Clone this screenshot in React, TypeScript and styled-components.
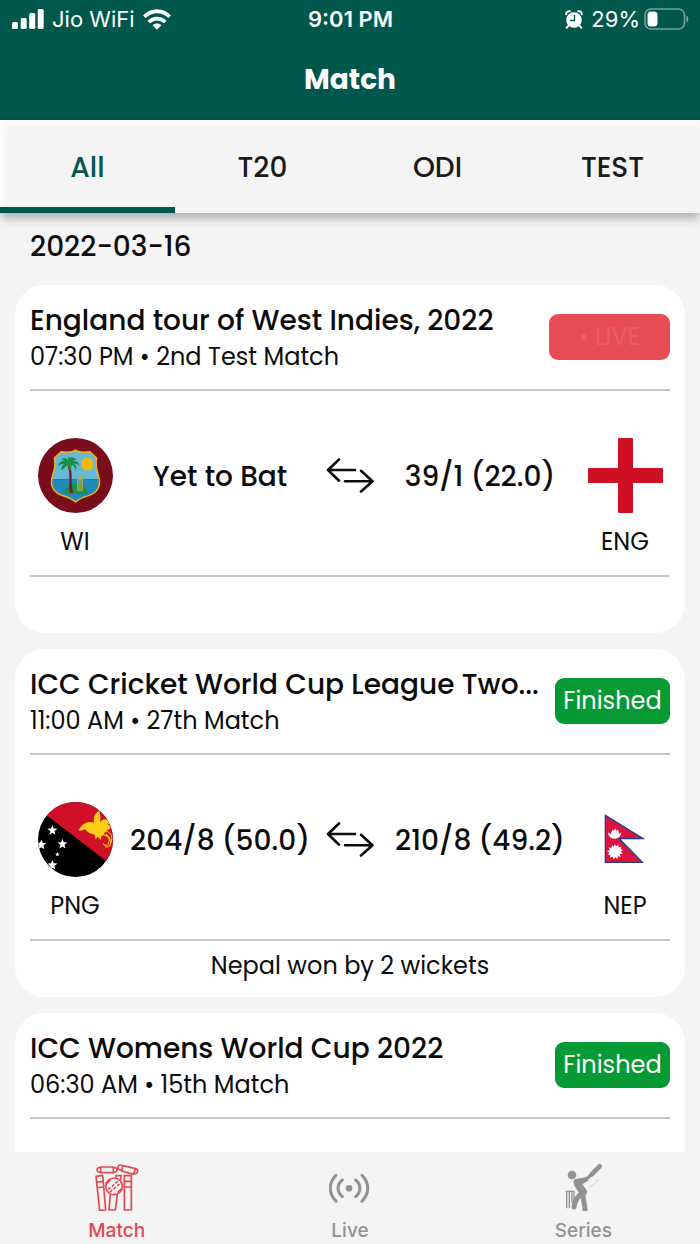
import React from 'react';
import styled, { createGlobalStyle } from 'styled-components';

const green = '#00574b';
const red = '#e5474f';

const GlobalStyle = createGlobalStyle`
  *, *::before, *::after { box-sizing: border-box; }
  body { margin: 0; background: #f4f4f4; }
  body, button { font-family: Poppins, Inter, "Noto Sans", sans-serif; color: #0c0c0c; }
  h1, h2, h3, p { margin: 0; }
`;

const Screen = styled.div`
  display: flex;
  flex-direction: column;
  height: 100vh;
  background: #f4f4f4;
`;

const Header = styled.header`
  flex: none;
  background: ${green};
  color: #fff;
`;

const StatusBar = styled.div`
  display: grid;
  grid-template-columns: 1fr auto 1fr;
  align-items: center;
  height: 38px;
  padding: 0 11px 0 12px;
  font-family: Inter, sans-serif;
  font-size: 22px;
  line-height: 28px;
`;

const StatusGroup = styled.div<{ $end?: boolean }>`
  display: flex;
  align-items: center;
  justify-content: ${(p) => (p.$end ? 'flex-end' : 'flex-start')};
  gap: 8px;
`;

const Charge = styled.span`
  display: flex;
  align-items: center;
  gap: 4px;
`;

const Clock = styled.span`
  font-weight: 600;
`;

const PageTitle = styled.h1`
  height: 82px;
  font-size: 28px;
  font-weight: 700;
  line-height: 84px;
  text-align: center;
`;

const Tabs = styled.nav`
  position: relative;
  z-index: 1;
  display: flex;
  flex: none;
  height: 93px;
  background: #f4f4f4;
  box-shadow: 0 5px 10px rgba(0, 0, 0, 0.3), inset 0 10px 10px -6px #fff, inset 8px 0 8px -6px #fff;
`;

const Tab = styled.button<{ $active?: boolean }>`
  flex: 1;
  padding: 8px 0 0;
  border: 0;
  border-bottom: 6px solid ${(p) => (p.$active ? green : 'transparent')};
  background: none;
  color: ${(p) => (p.$active ? green : '#1a1a1a')};
  font-size: 28px;
  font-weight: 500;
  line-height: 36px;
`;

const List = styled.main`
  flex: 1;
  min-height: 0;
  padding: 16px 15px 0;
  overflow: hidden;
`;

const DateHeading = styled.h2`
  margin: 0 15px 20px;
  font-size: 28px;
  font-weight: 500;
  line-height: 36px;
`;

const Card = styled.article`
  min-height: 348px;
  margin-bottom: 16px;
  padding: 0 15px;
  border-radius: 30px;
  background: #fff;
`;

const CardHead = styled.div`
  display: flex;
  align-items: center;
  justify-content: space-between;
  gap: 12px;
  height: 106px;
  border-bottom: 2px solid #c8c8c8;
`;

const CardText = styled.div`
  min-width: 0;
  padding-top: 3px;
  white-space: nowrap;
`;

const CardTitle = styled.h3`
  font-size: 28px;
  font-weight: 500;
  line-height: 36px;
`;

const Detail = styled.p`
  font-size: 24px;
  line-height: 36px;
`;

const Badge = styled.span<{ $live?: boolean }>`
  flex: none;
  min-width: ${(p) => (p.$live ? 121 : 115)}px;
  border-radius: 9px;
  background: ${(p) => (p.$live ? '#e84c54' : '#069a34')};
  color: ${(p) => (p.$live ? '#e85f67' : '#fff')};
  font-size: 24px;
  line-height: 46px;
  text-align: center;
`;

const Teams = styled.div`
  display: grid;
  grid-template-columns: 90px 1fr 60px 1fr 90px;
  height: 186px;
  padding-top: 47px;
  border-bottom: 2px solid #c8c8c8;
  text-align: center;
`;

const Team = styled.div`
  display: flex;
  flex-direction: column;
  align-items: center;
  gap: 11px;
  font-size: 24px;
  line-height: 36px;
`;

const Score = styled.p`
  font-size: 28px;
  font-weight: 500;
  line-height: 78px;
  white-space: nowrap;
`;

const Swap = styled.div`
  display: flex;
  align-items: center;
  justify-content: center;
  height: 75px;
`;

const Result = styled.p`
  padding-top: 7px;
  font-size: 24px;
  line-height: 36px;
  text-align: center;
`;

const BottomNav = styled.nav`
  display: flex;
  flex: none;
  height: 92px;
  background: #f4f4f4;
`;

const NavItem = styled.button<{ $active?: boolean }>`
  display: flex;
  flex: 1;
  flex-direction: column;
  align-items: center;
  gap: 8px;
  padding: 11px 0 0;
  border: 0;
  background: none;
  color: ${(p) => (p.$active ? red : '#929292')};
  font-family: Inter, sans-serif;
  font-size: 19px;
  font-weight: 500;
  line-height: 24px;
`;

const SignalIcon = () => (
  <svg width="32" height="20" viewBox="0 0 32 20" fill="#fff" aria-hidden="true">
    <rect x="0" y="13" width="6" height="7" rx="1.5" />
    <rect x="8.7" y="9" width="6" height="11" rx="1.5" />
    <rect x="17.2" y="4" width="6" height="16" rx="1.5" />
    <rect x="25.7" y="0" width="6" height="20" rx="1.5" />
  </svg>
);

const WifiIcon = () => (
  <svg width="28" height="21" viewBox="0 0 28 21" fill="none" stroke="#fff" strokeWidth="3.8" aria-hidden="true">
    <path d="M1.3 7.8C8.5 .4 19.5 .4 26.7 7.8" />
    <path d="M5.8 13C10.4 8.6 17.6 8.6 22.2 13" />
    <path d="M14 20.8l-4.4-4.6c2.5-2.2 6.3-2.2 8.8 0z" fill="#fff" stroke="none" />
  </svg>
);

const AlarmIcon = () => (
  <svg width="18" height="19" viewBox="0 0 18 19" aria-hidden="true">
    <circle cx="9" cy="10" r="7.8" fill="#fff" />
    <path d="M1.2 4.2a3 3 0 0 1 3.6-3M16.8 4.2a3 3 0 0 0-3.6-3M3.6 15.5l-2 2.3M14.4 15.5l2 2.3" fill="none" stroke="#fff" strokeWidth="2" strokeLinecap="round" />
    <path d="M9.5 5v5.5H5" fill="none" stroke={green} strokeWidth="1.3" />
  </svg>
);

const BatteryIcon = () => (
  <svg width="45" height="22" viewBox="0 0 45 22" aria-hidden="true">
    <rect x="1" y="1" width="39.5" height="20" rx="6" fill="none" stroke="#fff" strokeOpacity=".45" strokeWidth="1.6" />
    <rect x="3.5" y="3.5" width="10" height="15" rx="3.5" fill="#fff" />
    <path d="M42.5 7.5c2.4 1.4 2.4 5.6 0 7z" fill="#fff" fillOpacity=".5" />
  </svg>
);

const SwapIcon = () => (
  <svg width="48" height="35" viewBox="0 0 48 35" fill="none" stroke="#0c0c0c" strokeWidth="2.6" strokeLinecap="round" strokeLinejoin="round" aria-label="versus">
    <path d="M29 12H2M13 1.5L2 12l11 10.7" />
    <path d="M19 23.3h27.5M35 12.8l11.5 10.5L35 33.5" />
  </svg>
);

const shieldOutline =
  'M112 36c10 8 27 7 43 5l20 19c-6 24 2 38 8 62 4 28-9 42-32 50-18 6-29 10-39 19-10-9-21-13-39-19-23-8-36-22-32-50 6-24 14-38 8-62l20-19c16 2 33 3 43-5z';

const WestIndiesFlag = () => (
  <svg width="75" height="75" viewBox="0 0 224 224" aria-hidden="true">
    <defs>
      <clipPath id="shield"><path d={shieldOutline} /></clipPath>
    </defs>
    <circle cx="112" cy="112" r="112" fill="#7a0d1b" />
    <g clipPath="url(#shield)">
      <rect x="30" y="25" width="165" height="98" fill="#67bad7" />
      <rect x="30" y="123" width="165" height="80" fill="#218abd" />
      <path d="M77 167c8-42 63-42 73 0z" fill="#179447" />
    </g>
    <circle cx="147" cy="78" r="19" fill="#f5b90e" />
    <path d="M89 84c8 25 3 50 6 80h10c-8-31-1-55-8-80z" fill="#7a1a1c" />
    <path d="M93 73c-4-14-17-18-24-8 5-1 9 1 12 4-14-2-20 7-21 15 6-6 12-7 18-6-8 6-9 13-7 20 5-9 12-13 20-16 1 5 3 9 2 15 7-5 8-11 7-17 8 4 11 9 13 17 5-9 1-15-5-20 7-1 11 2 16 6-2-10-9-15-19-14 3-4 6-5 11-4-8-10-19-8-23 8z" fill="#138f42" />
    <path d="M93 70c-10-16 4-17 2-7 5-12 14-3 1 8z" fill="#138f42" />
    <path d="M117 158v-45h4v45zM123.5 158v-45h4v45zM130 158v-45h4v45z" fill="#b5ae51" />
    <path d={shieldOutline} fill="none" stroke="#eeb01a" strokeWidth="4.5" />
  </svg>
);

const EnglandFlag = () => (
  <svg width="75" height="75" viewBox="0 0 75 75" fill="#cf1024" aria-hidden="true">
    <rect x="30" y="0" width="15" height="75" rx="1" />
    <rect x="0" y="30" width="75" height="15" rx="1" />
  </svg>
);

const star = 'M0-15L4-5 15-4 6 3 9 14 0 8-9 14-6 3-15-4-4-5z';

const PapuaFlag = () => (
  <svg width="75" height="75" viewBox="0 0 224 224" aria-hidden="true">
    <defs>
      <clipPath id="disc"><circle cx="112" cy="112" r="112" /></clipPath>
    </defs>
    <g clipPath="url(#disc)">
      <rect width="224" height="224" />
      <path d="M0 20V0h224v192z" fill="#cf1026" />
      <path d="M121 85c12-22 28-29 46-23-2-18 4-30 16-36 3 12 5 22 2 35 10-14 20-11 33 1-7 0-9 3-9 7l11 2c-3 8-8 13-17 15-4 7-8 14-14 17l-1 11-9-10-7 8-3-15c-14-1-21-6-28-16-5 4-13 5-20 4z" fill="#ffcc18" />
      <path d="M201 87c18 3 24 19 16 37M192 97c20 3 25 16 17 29-5 7-12 2-15-2M203 96c23 20 15 42-3 38" fill="none" stroke="#ffcc18" strokeWidth="3" />
      <g fill="#fff">
        <path d={star} transform="translate(43 84)" />
        <path d={star} transform="translate(73 125)" />
        <path d={star} transform="translate(10 127)" />
        <path d={star} transform="translate(43 188)" />
        <path d={star} transform="translate(58 156) scale(.45)" />
      </g>
    </g>
  </svg>
);

const NepalFlag = () => (
  <svg width="75" height="75" viewBox="0 0 225 225" aria-hidden="true">
    <path d="M52 40l113 70H94l69 71H52z" fill="#dc143c" stroke="#263c94" strokeWidth="4" />
    <path d="M60 90c5 11 35 11 40 0 0 27-40 27-40 0z" fill="#fff" />
    <path d="M68 100c0-10 4-11 5-17l5 3 3-7 4 7 5-3c1 6 4 7 3 17z" fill="#fff" />
    <path d="M80 126l4 7 7-5 1 8 8-2-2 8 7 2-6 5 5 6-8 1 2 8-8-1-2 8-6-5-5 6-3-8-8 3 1-8-8-1 5-6-7-5 8-3-3-8 8 2 2-8 6 5z" fill="#fff" />
  </svg>
);

const MatchIcon = () => (
  <svg width="44" height="48" viewBox="0 0 132 144" fill="none" stroke="currentColor" strokeWidth="5" strokeLinejoin="round" aria-hidden="true">
    <path d="M3 40l20-3 9 104-18 1zM5 57l20-2M7 74l20-2M88 38h21v103H88zM88 55h21M88 72h21M62 48l1-10h16l-3 14M46 94l-4 47h19l6-47" />
    <circle cx="57" cy="70" r="25" />
    <path d="M40 79l32-27M45 87l33-28" strokeDasharray="9 5" />
    <path d="M34 63l12-12M68 89l12-12M17 12h38v17H17zM84 8l37 9-5 17-36-10z" />
    <path d="M17 14c-8-2-11 3-11 7s4 7 11 6M55 14c7-2 11 2 11 7s-4 7-11 6M84 9c-8-5-13-3-15 2s1 10 11 11M120 17c7 1 9 5 8 9s-6 8-12 5" />
  </svg>
);

const LiveIcon = () => (
  <svg width="42" height="48" viewBox="0 0 126 144" fill="none" stroke="currentColor" strokeWidth="9" strokeLinecap="round" aria-hidden="true">
    <circle cx="60" cy="76" r="10" fill="currentColor" stroke="none" />
    <path d="M40 51c-17 14-17 36 0 50M80 51c17 14 17 36 0 50M21 37c-23 24-23 54 0 78M99 37c23 24 23 54 0 78" />
  </svg>
);

const SeriesIcon = () => (
  <svg width="44" height="48" viewBox="0 0 132 144" fill="none" stroke="currentColor" strokeLinecap="round" strokeLinejoin="round" aria-hidden="true">
    <circle cx="33" cy="36" r="13" fill="currentColor" stroke="none" />
    <path d="M49 59c4 10 10 18 17 27" strokeWidth="23" />
    <path d="M62 92c-14 9-20 22-23 40" strokeWidth="15" />
    <path d="M67 88c-5 16 5 28 5 52" strokeWidth="15" />
    <path d="M44 54l33-7 12-10" strokeWidth="10" />
    <path d="M52 65l26-14" strokeWidth="8" />
    <path d="M92 34l24-24" strokeWidth="14" />
    <path d="M81 44l14-13" strokeWidth="7" />
    <path d="M17 134V88M25 134V88M33 118V88M15 85h24v30" strokeWidth="4" />
    <path d="M110 50c-5 11-14 18-25 23" strokeWidth="2" opacity=".5" />
  </svg>
);

interface Side {
  name: string;
  score: string;
  flag: React.ReactNode;
}

interface MatchInfo {
  title: string;
  detail: string;
  live?: boolean;
  sides?: [Side, Side];
  result?: string;
}

const matches: MatchInfo[] = [
  {
    title: 'England tour of West Indies, 2022',
    detail: '07:30 PM • 2nd Test Match',
    live: true,
    sides: [
      { name: 'WI', score: 'Yet to Bat', flag: <WestIndiesFlag /> },
      { name: 'ENG', score: '39/1 (22.0)', flag: <EnglandFlag /> },
    ],
  },
  {
    title: 'ICC Cricket World Cup League Two...',
    detail: '11:00 AM • 27th Match',
    sides: [
      { name: 'PNG', score: '204/8 (50.0)', flag: <PapuaFlag /> },
      { name: 'NEP', score: '210/8 (49.2)', flag: <NepalFlag /> },
    ],
    result: 'Nepal won by 2 wickets',
  },
  { title: 'ICC Womens World Cup 2022', detail: '06:30 AM • 15th Match' },
];

const MatchCard = ({ title, detail, live, sides, result }: MatchInfo) => (
  <Card>
    <CardHead>
      <CardText>
        <CardTitle>{title}</CardTitle>
        <Detail>{detail}</Detail>
      </CardText>
      <Badge $live={live}>{live ? '• LIVE' : 'Finished'}</Badge>
    </CardHead>
    {sides && (
      <Teams>
        <Team>{sides[0].flag}<span>{sides[0].name}</span></Team>
        <Score>{sides[0].score}</Score>
        <Swap><SwapIcon /></Swap>
        <Score>{sides[1].score}</Score>
        <Team>{sides[1].flag}<span>{sides[1].name}</span></Team>
      </Teams>
    )}
    {result && <Result>{result}</Result>}
  </Card>
);

export default function App() {
  return (
    <Screen>
      <GlobalStyle />
      <Header>
        <StatusBar>
          <StatusGroup><SignalIcon /><span>Jio WiFi</span><WifiIcon /></StatusGroup>
          <Clock>9:01 PM</Clock>
          <StatusGroup $end><AlarmIcon /><Charge>29%<BatteryIcon /></Charge></StatusGroup>
        </StatusBar>
        <PageTitle>Match</PageTitle>
      </Header>
      <Tabs>
        {['All', 'T20', 'ODI', 'TEST'].map((label, i) => (
          <Tab key={label} type="button" $active={i === 0}>{label}</Tab>
        ))}
      </Tabs>
      <List>
        <DateHeading>2022-03-16</DateHeading>
        {matches.map((m) => <MatchCard key={m.title} {...m} />)}
      </List>
      <BottomNav>
        <NavItem type="button" $active><MatchIcon />Match</NavItem>
        <NavItem type="button"><LiveIcon />Live</NavItem>
        <NavItem type="button"><SeriesIcon />Series</NavItem>
      </BottomNav>
    </Screen>
  );
}
